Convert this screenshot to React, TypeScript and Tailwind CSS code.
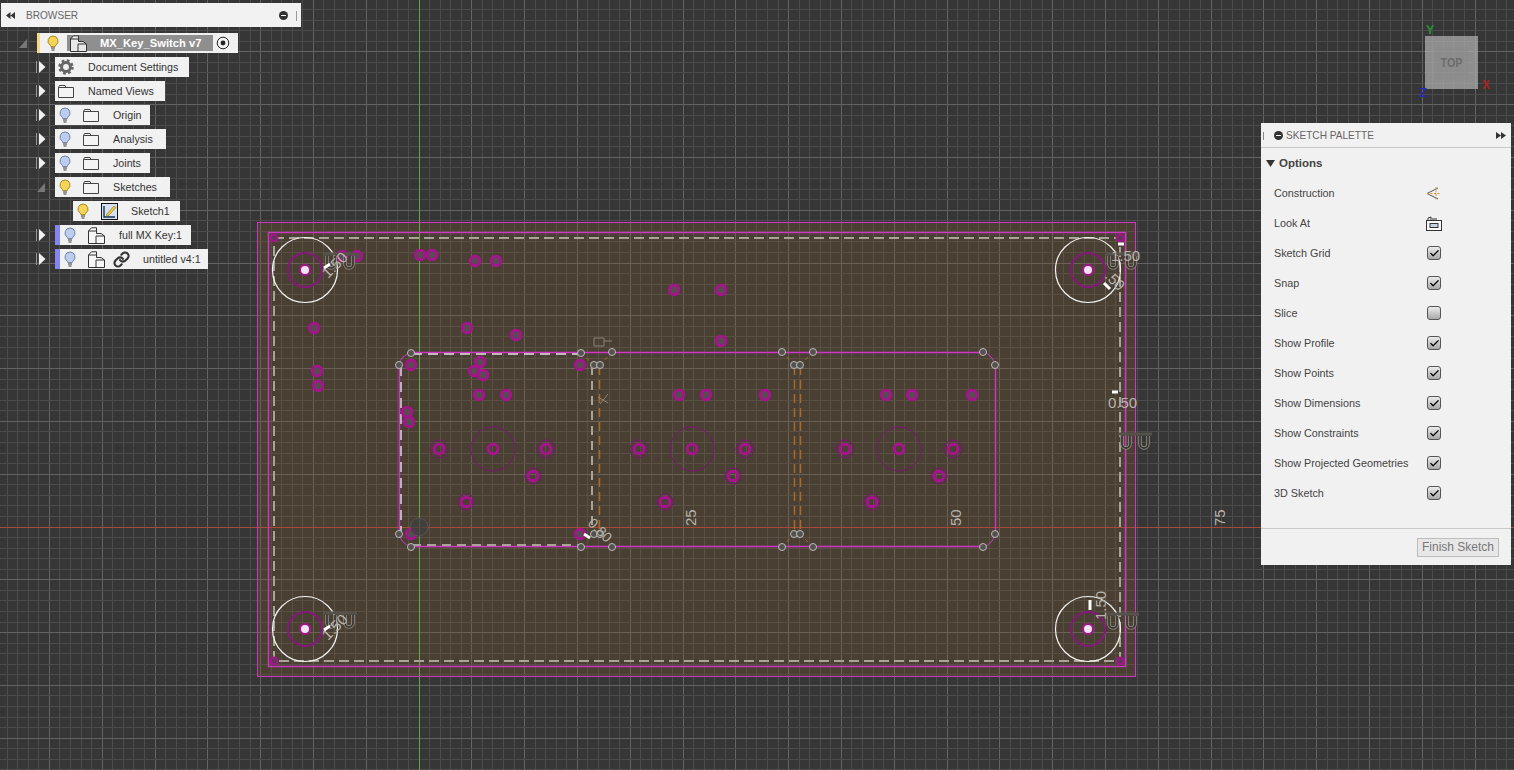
import { Check, Link } from "lucide-react";

const font = "font-['Liberation_Sans',Arial,sans-serif]";

// grid is measured off the origin at (419, 527): 10.56px a cell, every fifth line is brighter
const cell = 10.56;
const gridXs = Array.from({ length: 145 }, (_, i) => Math.floor(419 + (i - 40) * cell) + 0.5);
const gridYs = Array.from({ length: 75 }, (_, i) => Math.floor(527 + (i - 50) * cell) + 0.5);

const smallPoints: [number, number][] = [
  [342, 256], [357, 256], [420, 255], [432, 255], [475, 261], [496, 261],
  [314, 328], [467, 328], [516, 335], [317, 371], [318, 386],
  [674, 290], [721, 290], [721, 341],
  [411, 365], [580, 365], [480, 362], [474, 371], [483, 375], [479, 395], [506, 395],
  [407, 412], [409, 422], [679, 395], [706, 395], [765, 395], [886, 395], [912, 395], [972, 395],
  [411, 534], [580, 534],
];

const ringedPoints: [number, number, number][] = [
  [439, 449, 9], [546, 449, 9], [533, 476, 8], [466, 502, 8],
  [639, 449, 9], [745, 449, 9], [733, 476, 8], [665, 502, 8],
  [845, 449, 9], [953, 449, 9], [939, 476, 8], [872, 502, 8],
];

const centers: [number, number][] = [[493, 449], [692, 449], [899, 449]];
const corners: [number, number][] = [[305, 270], [1088, 270], [305, 629], [1088, 629]];

const vertices: [number, number][] = [
  [411, 353], [399, 365], [399, 534], [411, 547], [581, 353], [581, 547],
  [594, 365], [600, 365], [594, 534], [600, 534], [612, 352], [612, 547],
  [782, 352], [782, 547], [794, 365], [800, 365], [794, 534], [800, 534],
  [813, 352], [813, 547], [983, 352], [983, 547], [995, 365], [995, 534],
];

function Bulb({ on }: { on: boolean }) {
  const fill = on ? "#f5d558" : "#bccdf0";
  const stroke = on ? "#a98a22" : "#6f83a8";
  return (
    <svg width="14" height="16" viewBox="0 0 14 16" className="shrink-0">
      <path d="M7 1a5 5 0 0 0-3 9c.6.5.8 1 .8 1.6h4.4c0-.6.2-1.1.8-1.6a5 5 0 0 0-3-9z" fill={fill} stroke={stroke} />
      <path d="M5 13h4M5.5 15h3" stroke="#777" strokeWidth="1.4" />
    </svg>
  );
}

function Folder() {
  return (
    <svg width="16" height="13" viewBox="0 0 16 13" className="shrink-0">
      <path d="M.5 2.5V12.5H15.5V2.5H8L7 .5H1.5L.5 2.5H8" fill="#f4f4f4" stroke="#444" />
    </svg>
  );
}

function Component({ light }: { light?: boolean }) {
  return (
    <svg width="17" height="17" viewBox="0 0 17 17" className="shrink-0">
      <path d="M.5 16.5V4L3.5.8H8.5V6.5H13L16.5 9V16.5Z" fill={light ? "#e8e8e8" : "#f7f7f7"} stroke="#333" />
      <path d="M8 16.5V9H16.5M.5 4H8.5" fill="none" stroke="#333" />
    </svg>
  );
}

function Gear() {
  return (
    <svg width="16" height="18" viewBox="0 0 18 18" className="shrink-0">
      <circle cx="9" cy="9" r="5" fill="none" stroke="#666" strokeWidth="3.4" />
      <circle cx="9" cy="9" r="7.2" fill="none" stroke="#666" strokeWidth="3" strokeDasharray="3 2.65" />
    </svg>
  );
}

function SketchIcon() {
  return (
    <svg width="17" height="17" viewBox="0 0 17 17" className="shrink-0">
      <rect x=".5" y=".5" width="16" height="16" fill="#d6e2f2" stroke="#111" />
      <path d="M3 3v11h11" fill="none" stroke="#17324f" strokeWidth="1.4" />
      <path d="M5 12 13 3l2 1.5L7 13z" fill="#f1c93b" stroke="#8b6d10" strokeWidth=".6" />
    </svg>
  );
}

function Arrow({ open }: { open?: boolean }) {
  if (open) {
    return (
      <svg width="10" height="12" viewBox="0 0 10 12" className="shrink-0">
        <path d="M9 2v9H1z" fill="#777" />
      </svg>
    );
  }
  return (
    <svg width="10" height="12" viewBox="0 0 10 12" className="shrink-0">
      <path d="M.5 0v12" stroke="#999" />
      <path d="M3 0 9.5 6 3 12z" fill="#f0f0f0" />
    </svg>
  );
}

function TreeRow({
  width,
  open,
  blue,
  children,
  label,
}: {
  width: string;
  open?: boolean;
  blue?: boolean;
  children: React.ReactNode;
  label: string;
}) {
  return (
    <div className="flex h-5 items-center pl-[35px]">
      <div className="flex w-[19px] shrink-0 items-center">
        <Arrow open={open} />
      </div>
      <div className={`flex h-5 items-center bg-[#f1f1f1] text-[10.7px] text-[#333] ${width} ${blue ? "border-l-[5px] border-[#8585f0] pl-[3px]" : "pl-[3px]"}`}>
        {children}
        <span className="whitespace-nowrap">{label}</span>
      </div>
    </div>
  );
}

function BrowserPanel() {
  return (
    <div className={`absolute left-px top-[3px] w-[300px] ${font}`}>
      <div className="flex h-6 items-center justify-between bg-[#f2f2f2] pl-[5px] pt-px text-[#666]">
        <div className="flex items-center gap-[11px]">
          <svg width="9" height="7" viewBox="0 0 9 7">
            <path d="M4.5 0v7L0 3.5zM9 0v7L4.5 3.5z" fill="#333" />
          </svg>
          <span className="text-[10.1px]">BROWSER</span>
        </div>
        <div className="flex items-center gap-2 pr-1">
          <div className="flex size-[9px] items-center justify-center rounded-full bg-[#333]">
            <div className="h-px w-[5px] bg-white" />
          </div>
          <div className="h-2.5 w-px bg-[#999]" />
        </div>
      </div>
      <div className="mt-1.5 flex flex-col gap-1">
        <div className="flex h-5 items-center pl-[17px]">
          <div className="w-[19px] shrink-0">
            <Arrow open />
          </div>
          <div className="flex h-5 w-[201px] items-center border-l-[3px] border-[#f5d88c] bg-[#f1f1f1] pl-1.5">
            <Bulb on />
            <div className="ml-[7px] flex h-4 w-[146px] items-center bg-[#8f8f8f] pl-[3px] text-[11.2px] font-bold text-white">
              <Component light />
              <span className="ml-[13px] whitespace-nowrap">MX_Key_Switch v7</span>
            </div>
            <svg width="14" height="14" viewBox="0 0 14 14" className="ml-[3px] shrink-0">
              <circle cx="7" cy="7" r="5.8" fill="none" stroke="#222" />
              <circle cx="7" cy="7" r="2.4" fill="#222" />
            </svg>
          </div>
        </div>
        <TreeRow width="w-[134px]" label="Document Settings">
          <Gear />
          <span className="ml-3.5" />
        </TreeRow>
        <TreeRow width="w-[110px]" label="Named Views">
          <Folder />
          <span className="ml-3.5" />
        </TreeRow>
        <TreeRow width="w-[95px]" label="Origin">
          <Bulb on={false} />
          <span className="ml-[11px]" />
          <Folder />
          <span className="ml-3.5" />
        </TreeRow>
        <TreeRow width="w-[111px]" label="Analysis">
          <Bulb on={false} />
          <span className="ml-[11px]" />
          <Folder />
          <span className="ml-3.5" />
        </TreeRow>
        <TreeRow width="w-[95px]" label="Joints">
          <Bulb on={false} />
          <span className="ml-[11px]" />
          <Folder />
          <span className="ml-3.5" />
        </TreeRow>
        <TreeRow width="w-[115px]" label="Sketches" open>
          <Bulb on />
          <span className="ml-[11px]" />
          <Folder />
          <span className="ml-3.5" />
        </TreeRow>
        <div className="flex h-5 items-center pl-[72px]">
          <div className="flex h-5 w-[107px] items-center bg-[#f1f1f1] pl-[3px] text-[10.7px] text-[#333]">
            <Bulb on />
            <span className="ml-[11px]" />
            <SketchIcon />
            <span className="ml-[13px] whitespace-nowrap">Sketch1</span>
          </div>
        </div>
        <TreeRow width="w-[136px]" label="full MX Key:1" blue>
          <Bulb on={false} />
          <span className="ml-[11px]" />
          <Component />
          <span className="ml-3.5" />
        </TreeRow>
        <TreeRow width="w-[153px]" label="untitled v4:1" blue>
          <Bulb on={false} />
          <span className="ml-[11px]" />
          <Component />
          <span className="ml-2" />
          <Link size={17} strokeWidth={3} className="shrink-0 text-[#333]" />
          <span className="ml-[13px]" />
        </TreeRow>
      </div>
    </div>
  );
}

function PaletteCheck({ checked }: { checked: boolean }) {
  return (
    <div className="flex size-[14px] items-center justify-center rounded-[3px] border border-[#555] bg-gradient-to-b from-[#ececec] to-[#a9a9a9]">
      {checked && <Check size={11} strokeWidth={2.6} className="text-black" />}
    </div>
  );
}

const paletteRows: { label: string; checked: boolean }[] = [
  { label: "Sketch Grid", checked: true },
  { label: "Snap", checked: true },
  { label: "Slice", checked: false },
  { label: "Show Profile", checked: true },
  { label: "Show Points", checked: true },
  { label: "Show Dimensions", checked: true },
  { label: "Show Constraints", checked: true },
  { label: "Show Projected Geometries", checked: true },
  { label: "3D Sketch", checked: true },
];

function SketchPalette() {
  return (
    <div className={`absolute left-[1261px] top-[123px] flex h-[442px] w-[250px] flex-col bg-[#f1f1f1] text-[#444] ${font}`}>
      <div className="flex h-[25px] shrink-0 items-center border-b border-[#c9c9c9] pl-0.5 pr-[5px] pt-px">
        <div className="h-2 w-px bg-[#888]" />
        <div className="ml-[10px] mr-[3px] flex size-[9px] items-center justify-center rounded-full bg-[#333]">
          <div className="h-px w-[5px] bg-white" />
        </div>
        <span className="text-[10.1px] text-[#666]">SKETCH PALETTE</span>
        <svg width="10" height="7" viewBox="0 0 10 7" className="ml-auto">
          <path d="M0 0l5 3.5L0 7zM5 0l5 3.5L5 7z" fill="#333" />
        </svg>
      </div>
      <div className="flex h-[30px] shrink-0 items-center pl-[5px] pt-px text-[11.5px] font-bold">
        <svg width="9" height="7" viewBox="0 0 9 7" className="mr-1">
          <path d="M0 0h9L4.5 7z" fill="#333" />
        </svg>
        Options
      </div>
      <div className="flex flex-col px-[13px] text-[10.8px]">
        <div className="flex h-[30px] items-center justify-between pr-[56px]">
          <span>Construction</span>
          <svg width="16" height="15" viewBox="0 0 16 15">
            <path d="M1 7.5 12 2M1 7.5 12 13" stroke="#555" fill="none" />
            <path d="M1 7.5h14M10 1v13" stroke="#e8912a" fill="none" strokeDasharray="2 1.5" />
          </svg>
        </div>
        <div className="flex h-[30px] items-center justify-between pr-[56px]">
          <span>Look At</span>
          <svg width="16" height="15" viewBox="0 0 16 15">
            <rect x=".5" y="4.5" width="15" height="10" fill="#f7f7f7" stroke="#333" />
            <rect x="4" y="7.5" width="8" height="4" fill="#c5d3e4" stroke="#333" />
            <path d="M2 4V2l3-1v3M6 3h5" stroke="#333" fill="none" />
          </svg>
        </div>
        {paletteRows.map((row) => (
          <div key={row.label} className="flex h-[30px] items-center justify-between pr-[57px]">
            <span className="whitespace-nowrap">{row.label}</span>
            <PaletteCheck checked={row.checked} />
          </div>
        ))}
      </div>
      <div className="mt-auto flex h-[37px] shrink-0 items-center justify-end border-t border-[#c9c9c9] pr-3">
        <button className="flex h-[19px] w-[82px] items-center justify-center border border-[#bdbdbd] bg-[#e7e7e7] text-[12px] text-[#777]">
          Finish Sketch
        </button>
      </div>
    </div>
  );
}

function ViewCube() {
  return (
    <svg width="90" height="90" viewBox="0 0 90 90" className="absolute left-[1410px] top-[18px]">
      <rect x="15" y="18" width="53" height="53" fill="#b0b0b0" fillOpacity="0.72" />
      <rect x="25" y="29" width="33" height="33" fill="#8a8a8a" fillOpacity="0.5" />
      <text x="41.5" y="49" textAnchor="middle" fontSize="13" fontWeight="700" fill="#6c6c6c" fontFamily="Liberation Sans" textLength="22" lengthAdjust="spacingAndGlyphs">
        TOP
      </text>
      <text x="20" y="16" textAnchor="middle" fontSize="13" fontWeight="700" fill="#2c8a3a" fontFamily="Liberation Sans">Y</text>
      <text x="13" y="79" textAnchor="middle" fontSize="13" fontWeight="700" fill="#2b2bb4" fontFamily="Liberation Sans">Z</text>
      <text x="76" y="71" textAnchor="middle" fontSize="12" fontWeight="700" fill="#a82222" fontFamily="Liberation Sans">X</text>
    </svg>
  );
}

function DimensionGhost({ x, y, spread = 18 }: { x: number; y: number; spread?: number }) {
  // overlapping dimension marks: a dark bar with two hollow hooks under it
  const hook = `M${x + 4} ${y + 3}v8a4 4 0 0 0 8 0v-8M${x + spread + 4} ${y + 3}v8a4 4 0 0 0 8 0v-8`;
  return (
    <g fill="none">
      <path d={`M${x} ${y + 1}h${spread + 16}`} stroke="#55524c" strokeWidth="3" />
      <path d={hook} stroke="#8f8b82" strokeWidth="3.6" />
      <path d={hook} stroke="#3c3832" strokeWidth="1.8" />
    </g>
  );
}

function Canvas() {
  return (
    <svg width="1514" height="770" viewBox="0 0 1514 770" className="absolute inset-0">
      <rect width="1514" height="770" fill="#363636" />

      {gridXs.map((x, i) => (
        <line key={i} x1={x} x2={x} y1="0" y2="770" stroke={(i - 40) % 5 === 0 ? "#636363" : "#4b4b4b"} />
      ))}
      {gridYs.map((y, i) => (
        <line key={i} x1="0" x2="1514" y1={y} y2={y} stroke={(i - 50) % 5 === 0 ? "#636363" : "#4b4b4b"} />
      ))}

      <rect x="258" y="223" width="877" height="454" fill="#895d2d" fillOpacity="0.25" />

      <line x1="419.5" x2="419.5" y1="0" y2="770" stroke="#5fa845" />
      <line x1="0" x2="1514" y1="527.5" y2="527.5" stroke="#a84a3a" />

      <rect x="257.5" y="222.5" width="878" height="454" fill="none" stroke="#cf36c8" />
      <rect x="268.5" y="232.5" width="857" height="434" fill="none" stroke="#cf36c8" strokeWidth="1.4" />
      <rect x="274" y="238" width="846" height="423" fill="none" stroke="#a8a498" strokeWidth="2" strokeDasharray="10 5" />

      {/* switch outlines */}
      <path d="M412 352.5H983M399.5 365V534M995.5 365V534M412 546.5H983" stroke="#cf36c8" strokeWidth="1.4" fill="none" />
      <path d="M399 365Q401 355 411 353M995 365Q993 355 983 352M399 534Q401 543 411 547M995 534Q993 544 983 547" stroke="#cf36c8" fill="none" />
      <path d="M412 354H580" stroke="#e6dfe0" strokeWidth="1.4" strokeDasharray="10 6" fill="none" />
      <path d="M401 366V533" stroke="#d8ced6" strokeWidth="1.6" strokeDasharray="10 6" fill="none" />
      <path d="M412 545H580" stroke="#a8a498" strokeWidth="2" strokeDasharray="9 6" fill="none" />
      <path d="M592 366V534" stroke="#a8a498" strokeWidth="2" strokeDasharray="9 6" fill="none" />
      <path d="M599.5 366V534M794.5 366V534M800.5 366V534" stroke="#a86a28" strokeWidth="1.5" strokeDasharray="9 5" fill="none" />
      <path d="M581 353 594 365M612 352 600 365M782 352 794 365M813 352 800 365M782 547 794 534M813 547 800 534" stroke="#a86a28" strokeDasharray="4 3" fill="none" />

      {centers.map(([x, y]) => (
        <g key={x}>
          <circle cx={x} cy={y} r="22" fill="none" stroke="#7a1673" />
          <circle cx={x} cy={y} r="4.8" fill="none" stroke="#a8128f" strokeWidth="3" />
        </g>
      ))}

      {ringedPoints.map(([x, y, r]) => (
        <g key={`${x}-${y}`}>
          <circle cx={x} cy={y} r={r} fill="none" stroke="#7a1673" />
          <circle cx={x} cy={y} r="4.8" fill="none" stroke="#a8128f" strokeWidth="3" />
        </g>
      ))}

      {smallPoints.map(([x, y]) => (
        <circle key={`${x}-${y}`} cx={x} cy={y} r="4.8" fill="#5a4a52" stroke="#a8128f" strokeWidth="2.8" />
      ))}

      {corners.map(([x, y]) => (
        <g key={`${x}-${y}`}>
          <circle cx={x} cy={y} r="32.5" fill="none" stroke="#f5f5f5" strokeWidth="1.2" />
          <circle cx={x} cy={y} r="17" fill="none" stroke="#86187c" strokeWidth="2" />
          <circle cx={x} cy={y} r="5" fill="#eee6ee" stroke="#a8128f" strokeWidth="2" />
        </g>
      ))}

      {([[274, 238], [1120, 238], [274, 661], [1120, 661]] as [number, number][]).map(([x, y]) => (
        <circle key={`${x}-${y}`} cx={x} cy={y} r="3.4" fill="#5c3a57" stroke="#a8128f" strokeWidth="2" />
      ))}

      {vertices.map(([x, y]) => (
        <circle key={`${x}-${y}`} cx={x} cy={y} r="3.5" fill="#55524e" stroke="#bcbcbc" />
      ))}

      <circle cx="419" cy="527" r="9" fill="#3f3f3f" fillOpacity="0.7" stroke="#555" />

      <DimensionGhost x={323} y={253} />
      <DimensionGhost x={1105} y={253} />
      <DimensionGhost x={1118} y={433} />
      <DimensionGhost x={323} y={612} />
      <DimensionGhost x={1105} y={613} />

      <g fill="#b8b4ab" fontFamily="Liberation Sans" fontSize="15">
        <text x="0" y="0" transform="translate(328 279) rotate(-45)">1.50</text>
        <text x="0" y="0" transform="translate(328 641) rotate(-45)">1.50</text>
        <text x="0" y="0" transform="translate(1104 277) rotate(45)">.50</text>
        <text x="1111" y="261">1.50</text>
        <text x="1108" y="408">0.50</text>
        <text x="0" y="0" transform="translate(1106 620) rotate(-90)">1.50</text>
        <text x="0" y="0" transform="translate(587 524) rotate(45)" fontSize="14">0.80</text>
        <text x="0" y="0" transform="translate(696 526) rotate(-90)">25</text>
        <text x="0" y="0" transform="translate(961 526) rotate(-90)">50</text>
        <text x="0" y="0" transform="translate(1225 526) rotate(-90)">75</text>
      </g>

      <path d="M1118 392h-6M1124 244h-6M1104 283l6 6M1090 600v10M330 264l-6 4M330 626l-6 4" stroke="#fff" strokeWidth="3" />
      <path d="M598 397l10 6M600 404l8-10M604 338h-10v8h10zM604 341h8" stroke="#8a8579" fill="none" />
      <path d="M584 534l6 4" stroke="#fff" strokeWidth="3" />
    </svg>
  );
}

export default function App() {
  return (
    <div className={`relative h-[770px] w-[1514px] overflow-hidden bg-[#363636] ${font}`}>
      <Canvas />
      <ViewCube />
      <BrowserPanel />
      <SketchPalette />
    </div>
  );
}
